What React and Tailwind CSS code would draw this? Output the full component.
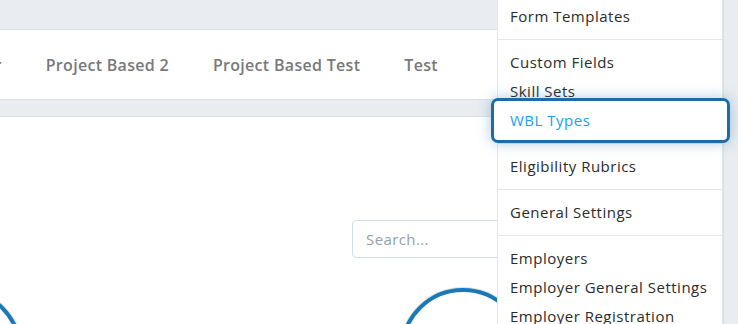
import React from 'react'

const font = { fontFamily: '"Open Sans", "Liberation Sans", sans-serif' }

const tabs = ['Project Based 2', 'Project Based Test', 'Test']

const menu = [
  { type: 'item', label: 'Forms' },
  { type: 'divider' },
  { type: 'item', label: 'Form Templates' },
  { type: 'divider' },
  { type: 'item', label: 'Custom Fields' },
  { type: 'item', label: 'Skill Sets' },
  { type: 'item', label: 'WBL Types', active: true },
  { type: 'divider' },
  { type: 'item', label: 'Eligibility Rubrics' },
  { type: 'divider' },
  { type: 'item', label: 'General Settings' },
  { type: 'divider' },
  { type: 'item', label: 'Employers' },
  { type: 'item', label: 'Employer General Settings' },
  { type: 'item', label: 'Employer Registration' },
  { type: 'item', label: 'Employer Agreements' },
]

function Ring() {
  return (
    <svg width="132" height="132" viewBox="0 0 132 132" className="shrink-0">
      <circle cx="66" cy="66" r="63" fill="none" stroke="#e2e2e2" strokeWidth="2" />
      <circle cx="66" cy="66" r="61" fill="none" stroke="#1a78b8" strokeWidth="4" />
    </svg>
  )
}

export default function App() {
  return (
    <div className="relative w-[738px] h-[324px] overflow-hidden bg-[#e9ecf0]" style={font}>
      <div className="flex h-full">
        <div className="flex-1 flex flex-col">
          <div className="h-[29px] shrink-0" />
          <div className="h-[71px] shrink-0 bg-white border-y border-[#dde1e6] flex items-center overflow-hidden">
            <div className="flex items-center gap-[44px] -ml-[45px] text-[16px] tracking-[0.3px] font-semibold text-[#797979] whitespace-nowrap">
              <span>Other</span>
              {tabs.map((t) => (
                <span key={t}>{t}</span>
              ))}
            </div>
          </div>
          <div className="h-[16px] shrink-0" />
          <div className="flex-1 bg-white border-t border-[#dde1e6] flex flex-col overflow-hidden">
            <div className="flex justify-end pt-[103px]">
              <div className="w-[371px] h-[38px] border border-[#d3dde7] rounded-[4px] flex items-center pl-[13px] text-[15px] tracking-[0.4px] text-[#95a1ad]">
                Search...
              </div>
            </div>
            <div className="flex gap-[372px] mt-[27px] -ml-[107px]">
              <Ring />
              <Ring />
            </div>
          </div>
        </div>
        <div className="w-[15px] shrink-0 border-l border-[#dde1e6] bg-[#e9ecf0]" />
      </div>

      <div className="absolute left-[497px] top-[-52px] w-[226px] py-2 bg-white border-x border-[#e3e7eb] z-10">
        {menu.map((m, i) =>
          m.type === 'divider' ? (
            <div key={i} className="my-2 h-px bg-[#e3e7eb]" />
          ) : (
            <div key={i} className="relative h-[29px] flex items-center px-[12px] text-[15px] tracking-[0.5px] whitespace-nowrap">
              {m.active && (
                <div className="absolute -left-[7px] -right-[8px] -top-[8px] -bottom-[8px] bg-white border-[3px] border-[#1b6ca8] rounded-[7px] shadow-[0_0_14px_rgba(27,108,168,0.35)]" />
              )}
              <span className={m.active ? 'relative text-[#1aa0f0]' : 'relative text-[#2b2b2b]'}>
                {m.label}
              </span>
            </div>
          )
        )}
      </div>
    </div>
  )
}
